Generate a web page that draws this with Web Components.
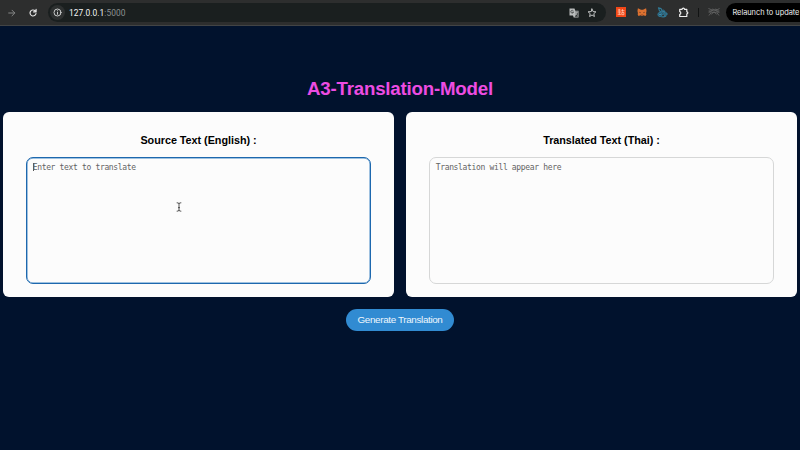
<!DOCTYPE html>
<html lang="en"><head><meta charset="utf-8"><title>A3-Translation-Model</title>
<style>
html,body{margin:0;height:100%;overflow:hidden;background:#01122d;font-family:"Liberation Sans",Arial,sans-serif}
</style></head><body>
<translation-page></translation-page>
<script>
customElements.define('browser-bar', class extends HTMLElement{
 constructor(){super();this.attachShadow({mode:'open'}).innerHTML=`
<style>
:host{display:flex;align-items:center;background:#2d2e2e;border-bottom:1px solid #424445;box-sizing:border-box;height:26px;padding-left:7px;font-family:Roboto,"Liberation Sans",sans-serif;overflow:hidden}
svg{display:block;flex:none;fill:none;stroke-linecap:round;stroke-linejoin:round}
.address{display:flex;align-items:center;box-sizing:border-box;width:558px;height:19px;border-radius:10px;background:#1a1f1f;margin-left:10px;padding:0 9px 0 2px;flex:none}
.info{width:15px;height:15px;border-radius:50%;background:#2d3030;display:grid;place-items:center;flex:none}
.url{font-size:8.4px;line-height:12px;color:#f2f4f4;letter-spacing:.05px;margin-left:4px;flex:1;white-space:nowrap}
.url span{color:#8b8f8f}
.update{flex:none;width:74px;box-sizing:border-box;height:19px;border-radius:10px 0 0 10px;background:#000;color:#eee;font:7.4px/19px Inter,sans-serif;letter-spacing:-.03px;padding-left:6.5px;margin-left:6px;white-space:nowrap}
.line{width:1px;height:9px;background:#121414;margin:0 9px;flex:none}
</style>
<svg width="10" height="10" viewBox="0 0 10 10" stroke="#858686"><path d="M1.7 5h6M5 2.2 7.8 5 5 7.8"/></svg>
<svg style="margin-left:11px" width="10" height="10" viewBox="0 0 10 10" stroke="#e5e5e5" stroke-width="1.2"><path d="M8 5.5A3 3 0 1 1 7.1 2.8L8 3.7M8.1 1.4v2.5H5.6"/></svg>
<div class="address"><div class="info"><svg width="9" height="9" viewBox="0 0 9 9" stroke="#d8dada" stroke-width=".9"><circle cx="4.5" cy="4.5" r="3.5"/><path d="M4.5 4.3v2M4.5 2.7v.1"/></svg></div>
<div class="url">127.0.0.1<span>:5000</span></div>
<svg width="10" height="10" viewBox="0 0 10 10"><path d="M.5.5h5l.8 2.2h3.2v6.8H4.7L4 7.4H.5z" fill="#b9bcbc"/><path d="M4.3 2.8A1.4 1.4 0 1 0 4.5 4.3H3.4" stroke="#313535" stroke-width=".7"/><path d="M6.5 3.5h2.3v5.2H5.7L6.7 7.3z" fill="#303535"/><path d="M6.1 4.7h2.4M7.3 4v.7M8 4.7 6.5 6.8M6.8 5.5 8.2 7.2" stroke="#c8caca" stroke-width=".6"/></svg>
<svg style="margin-left:8px" width="10" height="10" viewBox="0 0 10 10" stroke="#d2d4d4" stroke-width=".9"><path d="m5 1 1.1 2.6 2.8.2-2.1 1.9.6 2.8L5 7 2.6 8.5l.6-2.8L1.1 3.8l2.8-.2z"/></svg></div>
<svg style="margin-left:10px;margin-top:-1px" width="10" height="10" viewBox="0 0 10 10"><path d="M0 0h10v10H0z" fill="#f24717"/><path d="M2.2 3h2M3.2 2.3v2M2 5h2.7M3.3 5v2.3M2 7.3h2.8M6.4 2.5v1.8M5.7 3.7h2.4M5.8 7.3V5.5h2.1v1.8z" stroke="#ffd4c2" stroke-width=".7"/></svg>
<svg style="margin-left:11px;margin-top:-1px" width="10" height="10" viewBox="0 0 11 10"><path d="m1 1 3.4 1.4h2.2L10 1l.5 3-.5 2 .3 2-1 1.3-2.3-.6-.9.7H4.9L4 8.7l-2.3.6L.8 8 1 6 .5 4z" fill="#dc7130"/><path d="m2.7 5.4 1.2.3M8.3 5.4l-1.2.3" stroke="#683c29" stroke-width=".7"/><path d="M4.6 8.4h1.8" stroke="#683c29" stroke-width=".8"/></svg>
<svg style="margin-left:10px" width="11" height="11" viewBox="0 0 11 11" stroke="#307b98"><path d="m1.4.9 2.7.7.9 2.3M1.6 1.1l.8 2.6 1.4 1" stroke-width="1.1"/><circle cx="3" cy="7.5" r="2.1" fill="#285f76" stroke-width=".9"/><circle cx="6.1" cy="4.6" r="1.6" fill="#254e60" stroke-width=".9"/><circle cx="8.3" cy="7" r="1.7" fill="#254e60" stroke-width=".9"/><path d="M4.6 9.7q2.7.5 4.2-.7" stroke-width="1.1"/><path d="M2.3 7.5h1.4M5.6 4.6h1M7.8 7h1" stroke="#63a4bd" stroke-width=".6"/></svg>
<svg style="margin-left:10px;margin-top:-1px" width="11" height="11" viewBox="0 0 11 11" stroke="#eee" stroke-width="1.2"><path d="M1.7 2.3h2.4c0-1.7 2.4-1.7 2.4 0h2.3v2.5c1.4 0 1.4 2.1 0 2.1v2.6H1.7V7.3c1.5 0 1.5-2.7 0-2.7z"/></svg>
<div class="line"></div>
<svg style="margin-top:-1px" width="12" height="10" viewBox="0 0 12 10" stroke="#797979" stroke-width=".65"><path d="m.8 1.6 2.5 1.1L5 2l1.1.9L8 2l1 .9 2.2-1.2M1 4h2l1-.7 2 .8L8 3.3l1 .7h2M1 5.2l2.2-.4L5 5.5h2l1.8-.7 2.2.5M3 5.8 1.2 8.2M4.6 6.2 3.5 7M7.4 6.2l1 .8M9 5.8l1.8 2.4"/></svg>
<div class="update">Relaunch to update</div>`}
});
customElements.define('translation-panel', class extends HTMLElement{
 constructor(){super();this.attachShadow({mode:'open'}).innerHTML=`
<style>
:host{display:flex;flex-direction:column;box-sizing:border-box;height:185.4px;padding:20.6px 23.4px 13.4px;border-radius:6px;background:#fcfcfc}
h2{margin:0 0 9px;font-size:10.8px;line-height:15px;text-align:center;color:#000;letter-spacing:-.03px;white-space:nowrap}
.field{box-sizing:border-box;flex:1;border:1px solid #d6d7d7;border-radius:7px;padding:5px 5.3px;background:#fcfcfc;color:#636363;font:8px/10px "DejaVu Sans Mono",monospace;letter-spacing:-.335px;white-space:nowrap}
:host([focused]) .field{border-color:#1d68ae;box-shadow:inset 0 0 0 .5px #4387c4}
:host([focused]) .field::before{content:"";display:inline-block;width:1px;height:8px;background:#555;margin-right:-1px;vertical-align:-1.5px}
</style><h2><slot name="heading"></slot></h2><div class="field"><slot></slot></div>`}
});
customElements.define('action-button', class extends HTMLElement{
 constructor(){super();this.attachShadow({mode:'open'}).innerHTML=`
<style>:host{display:block;width:108px;height:22px;margin:11.6px auto 0}button{display:block;width:100%;height:100%;border:0;border-radius:11px;padding:0;background:#318bd2;color:#edf6fd;font:9.9px/22px "Liberation Sans",Arial,sans-serif;letter-spacing:-.36px;white-space:nowrap}</style><button><slot></slot></button>`}
});
customElements.define('text-pointer', class extends HTMLElement{
 constructor(){super();this.attachShadow({mode:'open'}).innerHTML=`
<style>:host{position:absolute;left:176px;top:202px;width:6px;height:10px}svg{display:block}</style><svg width="6" height="10" viewBox="0 0 6 10" fill="none" stroke="#444" stroke-width=".9"><path d="M.7.8Q3 .5 3 2v6q0 1.4-2.3 1.2M5.3.8Q3 .5 3 2M3 8q0 1.4 2.3 1.2M2 5.6h2"/></svg>`}
});
customElements.define('translation-page', class extends HTMLElement{
 constructor(){super();this.attachShadow({mode:'open'}).innerHTML=`
<style>
:host{display:block;position:relative;height:450px;overflow:hidden}
h1{margin:49px 0 10px;text-align:center;color:#ed4ce2;font-size:18.7px;line-height:27px;letter-spacing:-.2px;white-space:nowrap}
.panels{display:grid;grid-template-columns:1fr 1fr;gap:12px;padding:0 3px}
</style>
<browser-bar></browser-bar><main><h1>A3-Translation-Model</h1><div class="panels">
<translation-panel focused><span slot="heading">Source Text (English) :</span>Enter text to translate</translation-panel>
<translation-panel><span slot="heading">Translated Text (Thai) :</span>Translation will appear here</translation-panel></div>
<action-button>Generate Translation</action-button></main><text-pointer></text-pointer>`}
});
</script></body></html>
